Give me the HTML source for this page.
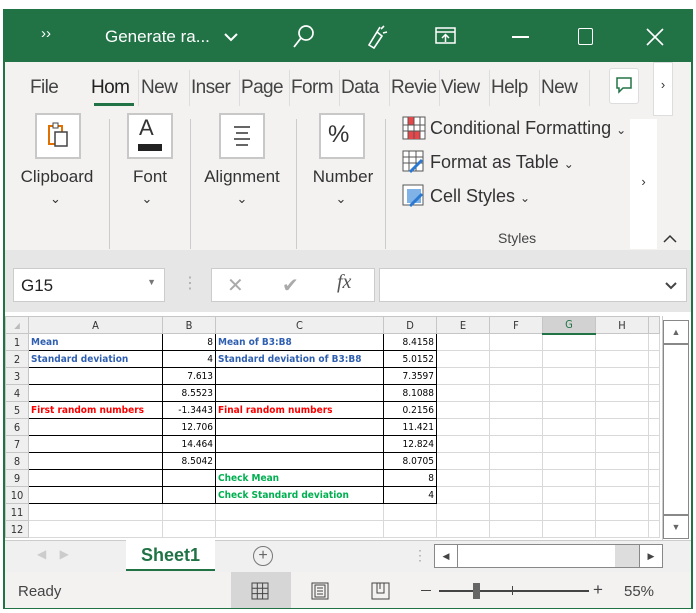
<!DOCTYPE html>
<html><head><meta charset="utf-8"><style>
*{margin:0;padding:0;box-sizing:border-box}
body{width:696px;height:613px;background:#fff;font-family:"Liberation Sans",sans-serif;position:relative;overflow:hidden}
.a{position:absolute}
.win{left:3px;top:9px;width:690px;height:600px;border:2px solid #217346;background:#f3f2f1}
.tb{left:0;top:0;width:686px;height:51px;background:#217346;color:#fff}
.rib{color:#333}
.grp{font-size:17px;color:#333;text-align:center}
.box{border:2px solid #c8c8c8;background:#fff;width:46px;height:46px}
.tab{top:15px;font-size:19px;color:#444;width:46px;overflow:hidden;white-space:nowrap;letter-spacing:-0.6px}
.sep{top:8px;width:1px;height:36px;background:#ddd}
table{border-collapse:collapse;table-layout:fixed;font-size:10px;font-family:"DejaVu Sans Condensed","Liberation Sans",sans-serif}
td{height:17px;border:1px solid #d9d9d9;padding:0 2px;white-space:nowrap;overflow:hidden}
td.h{background:#efefef;color:#333;text-align:center;border-color:#c6c6c6;font-size:11px}
td.b{border:1px solid #000}
.r{text-align:right}
.bl{color:#2f5fb0;font-weight:bold}.rd{color:#f00;font-weight:bold}.gr{color:#00b050;font-weight:bold}
</style></head><body>
<div class="a win">
 <div class="a tb">
  <div class="a" style="left:36px;top:14px;font-size:15px">››</div>
  <div class="a" style="left:100px;top:16px;font-size:17px">Generate ra...</div>
  <svg class="a" style="left:218px;top:20px" width="16" height="12"><path d="M2 3l6 6 6-6" stroke="#fff" stroke-width="2" fill="none"/></svg>
  <svg class="a" style="left:286px;top:12px" width="26" height="28"><circle cx="15" cy="10" r="7" stroke="#fff" stroke-width="1.7" fill="none"/><path d="M10 15L3 24" stroke="#fff" stroke-width="1.8"/></svg>
  <svg class="a" style="left:360px;top:12px" width="28" height="28"><path d="M4 22l5 3 8-12-5-4z M12 9l3-5 M16 6l3-3 M18 10l4-1" stroke="#fff" stroke-width="1.6" fill="none"/></svg>
  <svg class="a" style="left:430px;top:16px" width="22" height="20"><rect x="1" y="1" width="19" height="15" stroke="#fff" stroke-width="1.5" fill="none"/><path d="M1 5h19M10.5 15V8M7 11l3.5-3.5L14 11" stroke="#fff" stroke-width="1.5" fill="none"/></svg>
  <div class="a" style="left:507px;top:25px;width:17px;height:1.5px;background:#fff"></div>
  <div class="a" style="left:573px;top:17px;width:15px;height:17px;border:1.6px solid #fff;border-radius:2px"></div>
  <svg class="a" style="left:641px;top:17px" width="18" height="18"><path d="M1 1l16 16M17 1L1 17" stroke="#fff" stroke-width="1.6"/></svg>
 </div>
 <div class="a rib" style="left:0;top:51px;width:686px;height:188px">
  <div class="a tab" style="left:25px">File</div>
  <div class="a tab" style="left:86px;color:#222;width:43px">Hom</div>
  <div class="a" style="top:41px;left:89px;width:40px;height:3px;background:#217346"></div>
  <div class="a sep" style="left:133px"></div>
  <div class="a tab" style="left:136px">New</div><div class="a sep" style="left:184px"></div>
  <div class="a tab" style="left:186px">Inser</div><div class="a sep" style="left:234px"></div>
  <div class="a tab" style="left:236px">Page</div><div class="a sep" style="left:284px"></div>
  <div class="a tab" style="left:286px">Form</div><div class="a sep" style="left:334px"></div>
  <div class="a tab" style="left:336px">Data</div><div class="a sep" style="left:384px"></div>
  <div class="a tab" style="left:386px">Revie</div><div class="a sep" style="left:434px"></div>
  <div class="a tab" style="left:436px">View</div><div class="a sep" style="left:484px"></div>
  <div class="a tab" style="left:486px">Help</div><div class="a sep" style="left:534px"></div>
  <div class="a tab" style="left:536px">New</div><div class="a sep" style="left:584px"></div>
  <div class="a" style="left:604px;top:6px;width:30px;height:36px;background:#fff;border:1px solid #ddd;border-radius:3px"></div>
  <svg class="a" style="left:609px;top:13px" width="20" height="20"><path d="M3 3h14v10H9l-4 4v-4H3z" stroke="#217346" stroke-width="1.5" fill="none"/></svg>
  <div class="a" style="left:648px;top:0;width:20px;height:54px;background:#fff;border:1px solid #ddd;font-size:13px;text-align:center;padding-top:14px">›</div>
  <div class="a" style="left:625px;top:57px;width:27px;height:130px;background:#fff;font-size:13px;text-align:center;padding-top:55px">›</div>
  <div class="a box" style="left:30px;top:51px"></div>
  <svg class="a" style="left:42px;top:60px" width="24" height="28"><rect x="2" y="4" width="13" height="18" fill="none" stroke="#e07000" stroke-width="2"/><rect x="8" y="10" width="12" height="14" fill="#fff" stroke="#444" stroke-width="1.5"/><rect x="6" y="1" width="5" height="5" fill="#fff" stroke="#444"/></svg>
  <div class="a grp" style="left:10px;top:105px;width:84px">Clipboard</div>
  <div class="a" style="left:104px;top:57px;width:1px;height:130px;background:#ccc"></div>
  <div class="a box" style="left:122px;top:51px"></div>
  <div class="a" style="left:134px;top:53px;font-size:22px;color:#333">A</div>
  <div class="a" style="left:133px;top:82px;width:24px;height:7px;background:#222"></div>
  <div class="a grp" style="left:115px;top:105px;width:60px">Font</div>
  <div class="a" style="left:185px;top:57px;width:1px;height:130px;background:#ccc"></div>
  <div class="a box" style="left:214px;top:51px"></div>
  <svg class="a" style="left:226px;top:62px" width="22" height="22"><path d="M3 3h16M5 9h12M3 15h16M5 21h12" stroke="#333" stroke-width="1.6"/></svg>
  <div class="a grp" style="left:192px;top:105px;width:90px">Alignment</div>
  <div class="a" style="left:291px;top:57px;width:1px;height:130px;background:#ccc"></div>
  <div class="a box" style="left:314px;top:51px"></div>
  <div class="a" style="left:323px;top:59px;font-size:24px;color:#333">%</div>
  <div class="a grp" style="left:300px;top:105px;width:76px">Number</div>
  <div class="a" style="left:380px;top:57px;width:1px;height:130px;background:#ccc"></div>
  <div class="a grp" style="left:4px;top:129px;width:93px;font-size:13px">⌄</div>
  <div class="a grp" style="left:102px;top:129px;width:80px;font-size:13px">⌄</div>
  <div class="a grp" style="left:192px;top:129px;width:90px;font-size:13px">⌄</div>
  <div class="a grp" style="left:296px;top:129px;width:80px;font-size:13px">⌄</div>
  <svg class="a" style="left:397px;top:54px" width="24" height="24"><rect x="1" y="1" width="22" height="22" fill="#fff" stroke="#555"/><rect x="6" y="1" width="6" height="8" fill="#e8474a"/><rect x="6" y="15" width="12" height="8" fill="#e8474a"/><path d="M1 9h22M1 15h22M6 1v22M12 1v22M18 1v22" stroke="#555"/></svg>
  <div class="a" style="left:425px;top:56px;font-size:18px;color:#333">Conditional Formatting <span style="font-size:12px">⌄</span></div>
  <svg class="a" style="left:397px;top:88px" width="24" height="24"><rect x="1" y="1" width="20" height="20" fill="#fff" stroke="#555"/><path d="M1 7h20M1 13h20M7 1v20M14 1v20" stroke="#555"/><path d="M8 22l12-12" stroke="#2b79d0" stroke-width="3"/></svg>
  <div class="a" style="left:425px;top:90px;font-size:18px;color:#333">Format as Table <span style="font-size:12px">⌄</span></div>
  <svg class="a" style="left:397px;top:122px" width="24" height="24"><rect x="1" y="1" width="20" height="20" fill="#fff" stroke="#555"/><rect x="5" y="5" width="14" height="14" fill="#7fb2e6"/><path d="M8 22l12-12" stroke="#2b79d0" stroke-width="3"/></svg>
  <div class="a" style="left:425px;top:124px;font-size:18px;color:#333">Cell Styles <span style="font-size:12px">⌄</span></div>
  <div class="a" style="left:493px;top:168px;font-size:14px;color:#444">Styles</div>
  <svg class="a" style="left:658px;top:172px" width="14" height="10"><path d="M1 8l6-6 6 6" stroke="#333" stroke-width="1.5" fill="none"/></svg>
 </div>
 <div class="a" style="left:0;top:239px;width:686px;height:62px;background:#e6e6e6"></div>
 <div class="a" style="left:8px;top:257px;width:152px;height:34px;background:#fff;border:1px solid #ccc;font-size:17px;padding:7px 7px;color:#222">G15<span style="position:absolute;right:8px;top:8px;font-size:9px;color:#777">▼</span></div>
 <div class="a" style="left:177px;top:262px;color:#aaa;font-size:16px">⋮</div>
 <div class="a" style="left:206px;top:257px;width:164px;height:34px;background:#fff;border:1px solid #ccc"></div>
 <div class="a" style="left:222px;top:262px;font-size:20px;color:#aaa">✕</div>
 <div class="a" style="left:277px;top:262px;font-size:20px;color:#aaa">✔</div>
 <div class="a" style="left:332px;top:260px;font-size:20px;color:#555;font-family:'Liberation Serif',serif;font-style:italic">fx</div>
 <div class="a" style="left:374px;top:257px;width:308px;height:34px;background:#fff;border:1px solid #ccc"></div>
 <svg class="a" style="left:660px;top:271px" width="12" height="8"><path d="M1 1l5 5 5-5" stroke="#444" stroke-width="2" fill="none"/></svg>
 <div class="a" style="left:0;top:301px;width:686px;height:228px;background:#fff"></div>
 <table class="a" style="left:0;top:305px;width:654px">
  <colgroup><col style="width:23px"><col style="width:134px"><col style="width:53px"><col style="width:168px"><col style="width:53px"><col style="width:53px"><col style="width:53px"><col style="width:53px"><col style="width:53px"><col style="width:11px"></colgroup>
  <tr><td class="h" style="color:#bbb;font-size:8px">◢</td><td class="h">A</td><td class="h">B</td><td class="h">C</td><td class="h">D</td><td class="h">E</td><td class="h">F</td><td class="h" style="background:#d2d2d2;color:#217346;border-bottom:2px solid #217346">G</td><td class="h">H</td><td class="h"></td></tr>
  <tr><td class="h">1</td><td class="b bl">Mean</td><td class="b r">8</td><td class="b bl">Mean of B3:B8</td><td class="b r">8.4158</td><td></td><td></td><td></td><td></td><td></td></tr>
  <tr><td class="h">2</td><td class="b bl">Standard deviation</td><td class="b r">4</td><td class="b bl">Standard deviation of B3:B8</td><td class="b r">5.0152</td><td></td><td></td><td></td><td></td><td></td></tr>
  <tr><td class="h">3</td><td class="b"></td><td class="b r">7.613</td><td class="b"></td><td class="b r">7.3597</td><td></td><td></td><td></td><td></td><td></td></tr>
  <tr><td class="h">4</td><td class="b"></td><td class="b r">8.5523</td><td class="b"></td><td class="b r">8.1088</td><td></td><td></td><td></td><td></td><td></td></tr>
  <tr><td class="h">5</td><td class="b rd">First random numbers</td><td class="b r">-1.3443</td><td class="b rd">Final random numbers</td><td class="b r">0.2156</td><td></td><td></td><td></td><td></td><td></td></tr>
  <tr><td class="h">6</td><td class="b"></td><td class="b r">12.706</td><td class="b"></td><td class="b r">11.421</td><td></td><td></td><td></td><td></td><td></td></tr>
  <tr><td class="h">7</td><td class="b"></td><td class="b r">14.464</td><td class="b"></td><td class="b r">12.824</td><td></td><td></td><td></td><td></td><td></td></tr>
  <tr><td class="h">8</td><td class="b"></td><td class="b r">8.5042</td><td class="b"></td><td class="b r">8.0705</td><td></td><td></td><td></td><td></td><td></td></tr>
  <tr><td class="h">9</td><td class="b"></td><td class="b"></td><td class="b gr">Check Mean</td><td class="b r">8</td><td></td><td></td><td></td><td></td><td></td></tr>
  <tr><td class="h">10</td><td class="b"></td><td class="b"></td><td class="b gr">Check Standard deviation</td><td class="b r">4</td><td></td><td></td><td></td><td></td><td></td></tr>
  <tr><td class="h">11</td><td></td><td></td><td></td><td></td><td></td><td></td><td></td><td></td><td></td></tr>
  <tr><td class="h">12</td><td></td><td></td><td></td><td></td><td></td><td></td><td></td><td></td><td></td></tr>
 </table>
 <div class="a" style="left:657px;top:305px;width:29px;height:224px;background:#fff;border-left:1px solid #ccc"></div>
 <div class="a" style="left:658px;top:309px;width:26px;height:24px;border:1px solid #888;background:#fff;font-size:9px;text-align:center;padding-top:6px;color:#666">▲</div>
 <div class="a" style="left:658px;top:332px;width:26px;height:172px;border:1px solid #888;border-top:2px solid #888"></div>
 <div class="a" style="left:658px;top:504px;width:26px;height:24px;border:1px solid #888;background:#fff;font-size:9px;text-align:center;padding-top:6px;color:#666">▼</div>
 <div class="a" style="left:0;top:529px;width:686px;height:32px;background:#f0f0f0;border-top:1px solid #ccc"></div>
 <div class="a" style="left:32px;top:536px;color:#ccc;font-size:12px">◀&nbsp;&nbsp;&nbsp;&nbsp;▶</div>
 <div class="a" style="left:121px;top:529px;width:89px;height:31px;background:#fff;border-bottom:2px solid #217346;color:#217346;font-weight:bold;font-size:18px;text-align:center;padding-top:5px">Sheet1</div>
 <div class="a" style="left:248px;top:535px;width:20px;height:20px;border:1.3px solid #777;border-radius:50%;text-align:center;font-size:16px;line-height:17px;color:#666">+</div>
 <div class="a" style="left:408px;top:536px;color:#aaa;font-size:14px">⋮</div>
 <div class="a" style="left:429px;top:533px;width:224px;height:24px;background:#ddd;border:1px solid #888"></div>
 <div class="a" style="left:430px;top:534px;width:180px;height:22px;background:#fff"></div>
 <div class="a" style="left:429px;top:533px;width:24px;height:24px;background:#fff;border:1px solid #888;font-size:9px;text-align:center;padding-top:6px;color:#444">◀</div>
 <div class="a" style="left:634px;top:533px;width:24px;height:24px;background:#fff;border:1px solid #888;font-size:9px;text-align:center;padding-top:6px;color:#444">▶</div>
 <div class="a" style="left:0;top:561px;width:686px;height:36px;background:#f3f2f1"></div>
 <div class="a" style="left:13px;top:572px;font-size:15px;color:#444">Ready</div>
 <div class="a" style="left:226px;top:561px;width:60px;height:36px;background:#d6d6d6"></div>
 <svg class="a" style="left:246px;top:571px" width="18" height="18"><path d="M1 1h16v16H1zM1 6.3h16M1 11.6h16M6.3 1v16M11.6 1v16" stroke="#444" fill="none"/></svg>
 <svg class="a" style="left:306px;top:571px" width="18" height="18"><rect x="1" y="1" width="16" height="16" stroke="#444" fill="none"/><rect x="4" y="3" width="10" height="12" stroke="#444" fill="none"/><path d="M6 6h6M6 9h6M6 12h6" stroke="#444"/></svg>
 <svg class="a" style="left:366px;top:571px" width="20" height="18"><path d="M1 1h17v16H1zM6 1v10h7V1M9 1v6" stroke="#444" fill="none"/></svg>
 <div class="a" style="left:416px;top:579px;width:10px;height:1px;background:#444"></div>
 <div class="a" style="left:434px;top:579px;width:150px;height:1.5px;background:#444"></div>
 <div class="a" style="left:468px;top:572px;width:7px;height:16px;background:#666"></div>
 <div class="a" style="left:507px;top:575px;width:1px;height:9px;background:#444"></div>
 <div class="a" style="left:588px;top:569px;font-size:17px;color:#444">+</div>
 <div class="a" style="left:619px;top:572px;font-size:15px;color:#444">55%</div>
</div>
</body></html>
